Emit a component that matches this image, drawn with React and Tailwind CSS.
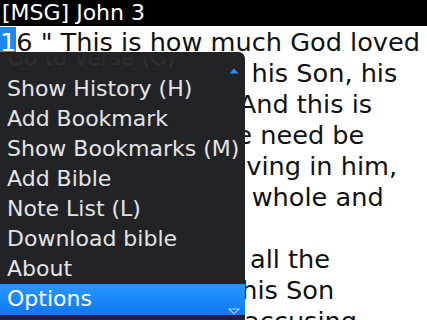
export default function App() {
  const lines = [
    "the world: He gave his Son, his",
    "one and only Son. And this is",
    "why: so that no one need be",
    "destroyed; by believing in him,",
    "anyone can have a whole and",
    "lasting life.",
  ];

  const items = [
    "Show History (H)",
    "Add Bookmark",
    "Show Bookmarks (M)",
    "Add Bible",
    "Note List (L)",
    "Download bible",
    "About",
  ];

  return (
    <div className="relative w-[427px] h-[320px] overflow-hidden bg-white font-['DejaVu_Sans',sans-serif]">
      {/* title bar */}
      <div className="h-[26px] bg-black text-white text-[22px] leading-[26px] pl-[2px] whitespace-nowrap">
        [MSG] John 3
      </div>

      {/* verse text */}
      <div className="pt-[1px] text-[25.6px] leading-[31px] text-[#111] whitespace-nowrap">
        <div>
          <span className="inline-block h-[28px] bg-[#1e88f0] text-white align-top">1</span>6 " This is how much God loved
        </div>
        {lines.map((l, i) => (
          <div key={i}>{l}</div>
        ))}
        <div>
          <span className="tracking-[-0.6px]">17 God didn't go to</span>
          <span className="ml-[14px]">all the</span>
        </div>
        <div>trouble of sending his Son</div>
        <div>merely to point an accusing</div>
      </div>

      {/* menu */}
      <div className="absolute left-0 top-[52px] w-[245px] h-[268px] bg-[#222327] rounded-tr-[7px] overflow-hidden text-[22px] leading-[30px] text-[#e4e4e6] whitespace-nowrap">
        <div className="relative h-[22px] overflow-hidden">
          <div className="-mt-[9px] pl-[7px] text-[#34353a]">Go to Verse (G)</div>
          <div className="absolute inset-x-0 top-0 h-[16px] bg-gradient-to-b from-[#222327] to-transparent" />
        </div>
        {items.map((t) => (
          <div key={t} className="h-[30px] pl-[7px]">
            {t}
          </div>
        ))}
        <div className="h-[31px] pl-[7px] bg-gradient-to-b from-[#2a97ff] to-[#0b78f2] text-white">
          Options
        </div>

        <svg className="absolute left-[229px] top-[16px]" width="10" height="6" viewBox="0 0 10 6">
          <polygon points="5,0.5 9.5,5.5 0.5,5.5" fill="#2a8cf0" />
        </svg>
        <svg className="absolute left-[228px] top-[256px]" width="12" height="7" viewBox="0 0 12 7">
          <polygon points="1,1 11,1 6,6" fill="none" stroke="#9fcdf8" strokeWidth="1.2" />
        </svg>
      </div>
    </div>
  );
}
